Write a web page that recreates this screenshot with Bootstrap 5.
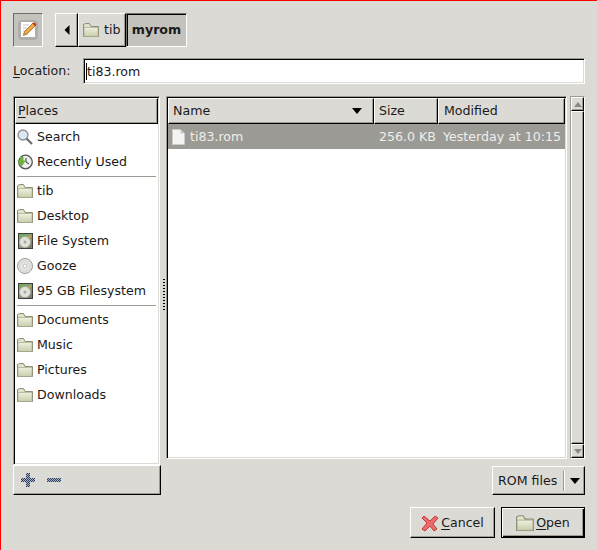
<!DOCTYPE html>
<html lang="en">
<head>
<meta charset="UTF-8" />
<title>Open File</title>
<link href="https://cdn.jsdelivr.net/npm/bootstrap@5.3.0/dist/css/bootstrap.min.css" rel="stylesheet">
<style>
  :root { --gtk-bg: #dcdad5; --gtk-dark: #9d9b94; }
  html, body { margin: 0; height: 100%; background: var(--gtk-bg); }
  body { font-family: "DejaVu Sans", sans-serif; font-size: 12.6px; line-height: 16px; color: #1a1a1a; overflow: hidden; }
  u { text-underline-offset: 2px; text-decoration-thickness: 1px; }
  .gtk-window { width: 597px; height: 550px; border-left: 1px solid #f00; border-top: 1px solid #f00; padding: 12px; background: var(--gtk-bg); }
  .bevel-out { border: 1px solid; border-color: #fff #000 #000 #fff; box-shadow: inset -1px -1px 0 var(--gtk-dark); }
  .bevel-in { border: 1px solid; border-color: var(--gtk-dark) #fff #fff var(--gtk-dark); box-shadow: inset 1px 1px 0 #000, inset -1px -1px 0 var(--gtk-bg); }
  .top-bar { height: 34px; margin-bottom: 11px; }
  .edit-toggle { width: 30px; height: 34px; background: #c4c2bd; border: 1px solid; border-color: #6f6e69 #fff #fff #6f6e69; margin-right: 12px; }
  .crumb { height: 34px; background: var(--gtk-bg); }
  .crumb-back { width: 23px; }
  .crumb-tib { width: 48px; gap: 5px; padding-left: 4px; }
  .crumb-cur { width: 61px; background: #c4c2bd; font-weight: 700; border-color: #6f6e69 #fff #fff #6f6e69; box-shadow: inset 1px 1px 0 #000; }
  .loc-row { height: 26px; margin-bottom: 12px; }
  .loc-label { width: 70px; }
  .loc-field { width: 502px; height: 26px; background: #fff; }
  .loc-input { border: 0; outline: 0; padding: 0 0 0 1px; margin-left: 2px; width: 480px; height: 22px; font: inherit; color: #1a1a1a; background: transparent; }
  .caret-mark { position: absolute; left: 2px; top: 4px; width: 1px; height: 17px; background: #000; }
  .main-row { height: 399px; }
  .places-col { width: 148px; }
  .places-pane { width: 147px; height: 369px; background: #fff; padding: 1px; }
  .col-head { height: 26px; padding-left: 2px; display: flex; align-items: center; background: var(--gtk-bg); white-space: nowrap; }
  .place-item { height: 25px; padding: 0 0 0 2px; gap: 4px; background: transparent; border: 0; border-radius: 0; color: #1a1a1a; white-space: nowrap; }
  .place-sep { height: 4px; padding: 1px 2px; }
  .place-sep div { height: 1px; background: var(--gtk-dark); margin-top: 1px; }
  .add-bar { width: 148px; height: 30px; background: var(--gtk-bg); padding-left: 6px; gap: 10px; }
  .pane-grip { width: 5px; height: 33px; background: repeating-linear-gradient(to bottom, #000 0, #000 1px, transparent 1px, transparent 3px) 2px 0 / 2px 100% no-repeat; }
  .files-col { width: 419px; }
  .files-pane { width: 401px; height: 363px; background: #fff; padding: 1px; flex: none; }
  .file-row { height: 25px; background: #9c9a94; color: #eeeeec; white-space: nowrap; }
  .cell-name { width: 206px; flex: none; }
  .head-name { padding-left: 4px; }
  .cell-size { width: 64px; flex: none; padding-left: 4px; }
  .cell-mod { flex: 1; padding-left: 5px; }
  .row-name { padding-left: 4px; gap: 5px; }
  .file-row .cell-size { padding-left: 5px; }
  .sort-arrow { margin-left: auto; margin-right: 11px; }
  .v-scroll { width: 15px; height: 363px; margin-left: 3px; background: #c4c2bd; border: 1px solid; border-color: var(--gtk-dark) #fff #fff var(--gtk-dark); }
  .scroll-btn { height: 14px; background: var(--gtk-bg); }
  .scroll-thumb { flex: 1; background: var(--gtk-bg); }
  .combo-row { margin-top: 7px; height: 29px; }
  .combo-btn { width: 93px; height: 29px; background: var(--gtk-bg); padding-left: 5px; }
  .combo-sep { width: 2px; height: 20px; margin-left: auto; border-left: 1px solid var(--gtk-dark); border-right: 1px solid #fff; }
  .combo-arrow { width: 19px; text-align: center; }
  .btn-row { margin-top: 12px; gap: 6px; }
  .gtk-btn { height: 31px; padding: 0; background: var(--gtk-bg); border-radius: 0; font: inherit; color: #1a1a1a; gap: 2px; }
  .gtk-btn:hover { background: var(--gtk-bg); color: #1a1a1a; }
  .btn-cancel { width: 85px; }
  .btn-open { width: 84px; border: 1px solid #000; box-shadow: inset 1px 1px 0 #fff, inset -1px -1px 0 #000, inset -2px -2px 0 var(--gtk-dark); }
</style>
</head>
<body>
<svg width="0" height="0" class="position-absolute">
  <defs>
    <linearGradient id="folderFill" x1="0" y1="0" x2="0" y2="1"><stop offset="0" stop-color="#eef0de"/><stop offset="1" stop-color="#c8ceaa"/></linearGradient>
    <linearGradient id="hdFill" x1="0" y1="0" x2="1" y2="1"><stop offset="0" stop-color="#62b048"/><stop offset=".4" stop-color="#8fa07c"/><stop offset="1" stop-color="#77786f"/></linearGradient>
    <radialGradient id="discFill"><stop offset="0" stop-color="#fff"/><stop offset=".7" stop-color="#d8d8d4"/><stop offset="1" stop-color="#eee"/></radialGradient>
    <pattern id="stipple" width="2" height="2" patternUnits="userSpaceOnUse"><rect width="2" height="2" fill="#a8b2c4"/><rect width="1" height="1" fill="#2f3f5c"/><rect x="1" y="1" width="1" height="1" fill="#2f3f5c"/></pattern>
    <symbol id="ico-folder" viewBox="0 0 16 16">
      <path d="M.5 2.500v12h15v-10H8L6.500 1.500h-4z" fill="#dfe1c8" stroke="#8e8f78"/>
      <path d="M1 14.500V5.500h14v9z" fill="url(#folderFill)" stroke="#a0a288" stroke-width=".6"/>
    </symbol>
    <symbol id="ico-hd" viewBox="0 0 16 16">
      <rect x="1.500" y=".5" width="14" height="15" fill="url(#hdFill)" stroke="#3d3f38"/>
      <circle cx="8" cy="9" r="5.500" fill="#e2e2dc" stroke="#a5a59c" stroke-width=".6"/>
      <circle cx="8" cy="9" r="1.500" fill="#a8a8a0"/>
      <path d="M9.500 7l3.500-4.500 1 1z" fill="#e6b422"/>
    </symbol>
    <symbol id="ico-disc" viewBox="0 0 16 16">
      <circle cx="8" cy="8" r="7.500" fill="url(#discFill)" stroke="#9a9a94"/>
      <circle cx="8" cy="8" r="2" fill="#fff" stroke="#a5a5a0" stroke-width=".7"/>
    </symbol>
  </defs>
</svg>

<div class="gtk-window d-flex flex-column">
  <div class="top-bar d-flex">
    <div class="edit-toggle d-flex align-items-center justify-content-center">
      <svg width="20" height="20" viewBox="0 0 20 20">
        <rect x="0" y="0" width="20" height="20" rx="4" fill="#b0aeaa"/>
        <rect x="3" y="2" width="14" height="15" fill="#fff"/>
        <path d="M5 5h6M5 8h4M5 11h3M5 14h5" stroke="#c4c4c4"/>
        <path d="M5.500 15.500l1-4L15 3l2.500 2.500L9 14z" fill="#eda93c" stroke="#8a5a1c" stroke-width=".7"/>
        <path d="M14.500 3.500l1.500-1.500 2.500 2.500L17 6z" fill="#cc2a2a"/>
      </svg>
    </div>
    <div class="d-flex">
      <div class="crumb crumb-back bevel-out d-flex align-items-center justify-content-center">
        <svg width="6" height="10" viewBox="0 0 6 10"><path d="M5.500 0v10L.5 5z" fill="#000"/></svg>
      </div>
      <div class="crumb crumb-tib bevel-out d-flex align-items-center">
        <svg width="16" height="16"><use href="#ico-folder"/></svg><span>tib</span>
      </div>
      <div class="crumb crumb-cur bevel-out d-flex align-items-center justify-content-center">myrom</div>
    </div>
  </div>

  <div class="loc-row d-flex align-items-center">
    <label class="loc-label" for="locInput"><u>L</u>ocation:</label>
    <div class="loc-field bevel-in position-relative d-flex align-items-center">
      <input id="locInput" class="loc-input" value="ti83.rom">
      <span class="caret-mark"></span>
    </div>
  </div>

  <div class="main-row d-flex">
    <div class="places-col d-flex flex-column">
      <div class="places-pane bevel-in">
        <div class="col-head bevel-out"><span><u>P</u>laces</span></div>
        <div class="list-group">
          <div class="list-group-item place-item d-flex align-items-center">
            <svg width="16" height="16" viewBox="0 0 16 16"><circle cx="6" cy="6" r="5" fill="#dbe6f2" stroke="#8d8f8c" stroke-width="1.300"/><path d="M9.500 9.500l5.500 5.500" stroke="#6e6e68" stroke-width="2.200"/></svg>Search
          </div>
          <div class="list-group-item place-item d-flex align-items-center">
            <svg width="16" height="16" viewBox="0 0 16 16"><circle cx="8.500" cy="8" r="6.800" fill="#eee" stroke="#55574f" stroke-width="1.300"/><path d="M9 4v4l3 2" stroke="#333" fill="none"/><path d="M0 6.500h3V3h3.500v3.500H9L4.500 12.500z" fill="#6fb03f"/></svg>Recently Used
          </div>
          <div class="place-sep"><div></div></div>
          <div class="list-group-item place-item d-flex align-items-center"><svg width="16" height="16"><use href="#ico-folder"/></svg>tib</div>
          <div class="list-group-item place-item d-flex align-items-center"><svg width="16" height="16"><use href="#ico-folder"/></svg>Desktop</div>
          <div class="list-group-item place-item d-flex align-items-center"><svg width="16" height="16"><use href="#ico-hd"/></svg>File System</div>
          <div class="list-group-item place-item d-flex align-items-center"><svg width="16" height="16"><use href="#ico-disc"/></svg>Gooze</div>
          <div class="list-group-item place-item d-flex align-items-center"><svg width="16" height="16"><use href="#ico-hd"/></svg>95 GB Filesystem</div>
          <div class="place-sep"><div></div></div>
          <div class="list-group-item place-item d-flex align-items-center"><svg width="16" height="16"><use href="#ico-folder"/></svg>Documents</div>
          <div class="list-group-item place-item d-flex align-items-center"><svg width="16" height="16"><use href="#ico-folder"/></svg>Music</div>
          <div class="list-group-item place-item d-flex align-items-center"><svg width="16" height="16"><use href="#ico-folder"/></svg>Pictures</div>
          <div class="list-group-item place-item d-flex align-items-center"><svg width="16" height="16"><use href="#ico-folder"/></svg>Downloads</div>
        </div>
      </div>
      <div class="add-bar bevel-out d-flex align-items-center">
        <svg width="16" height="16" viewBox="0 0 16 16" shape-rendering="crispEdges"><path d="M6 1h4v5h5v4h-5v5H6v-5H1V6h5z" fill="url(#stipple)"/></svg>
        <svg width="16" height="16" viewBox="0 0 16 16" shape-rendering="crispEdges"><rect x="1" y="6" width="14" height="4" fill="url(#stipple)"/></svg>
      </div>
    </div>

    <div class="pane-grip align-self-center"></div>

    <div class="files-col d-flex flex-column">
      <div class="d-flex">
        <div class="files-pane bevel-in">
          <div class="d-flex">
            <div class="col-head bevel-out cell-name head-name"><span>Name</span>
              <svg class="sort-arrow" width="10" height="6" viewBox="0 0 10 6"><path d="M0 0h10L5 6z" fill="#000"/></svg>
            </div>
            <div class="col-head bevel-out cell-size">Size</div>
            <div class="col-head bevel-out cell-mod">Modified</div>
          </div>
          <div class="file-row d-flex align-items-center">
            <div class="cell-name row-name d-flex align-items-center">
              <svg width="13" height="16" viewBox="0 0 13 16"><path d="M.5.5h8l4 4v11H.5z" fill="#f4f4f2" stroke="#d0d0cc" stroke-width=".6"/><path d="M8.500.5v4h4" fill="#ccc"/></svg>
              <span>ti83.rom</span>
            </div>
            <div class="cell-size">256.0 KB</div>
            <div class="cell-mod">Yesterday at 10:15</div>
          </div>
        </div>
        <div class="v-scroll d-flex flex-column">
          <div class="scroll-btn bevel-out d-flex align-items-center justify-content-center"><svg width="8" height="5" viewBox="0 0 8 5"><path d="M0 5h8L4 0z" fill="#8c8a84"/></svg></div>
          <div class="scroll-thumb bevel-out"></div>
          <div class="scroll-btn bevel-out d-flex align-items-center justify-content-center"><svg width="8" height="5" viewBox="0 0 8 5"><path d="M0 0h8L4 5z" fill="#8c8a84"/></svg></div>
        </div>
      </div>
      <div class="combo-row d-flex justify-content-end">
        <div class="combo-btn bevel-out d-flex align-items-center">ROM files<span class="combo-sep"></span>
          <span class="combo-arrow"><svg width="10" height="6" viewBox="0 0 10 6"><path d="M0 0h10L5 6z" fill="#000"/></svg></span>
        </div>
      </div>
    </div>
  </div>

  <div class="btn-row d-flex justify-content-end">
    <button type="button" class="btn gtk-btn btn-cancel bevel-out d-flex align-items-center justify-content-center">
      <svg width="18" height="18" viewBox="0 0 18 18"><path d="M3 2l6 5 5-5 3 2-5 6 4 5-3 2-4-5-5 5-3-2 5-6-5-5z" fill="#ec6a6a" stroke="#b22" stroke-width=".8"/></svg>
      <span><u>C</u>ancel</span>
    </button>
    <button type="button" class="btn gtk-btn btn-open d-flex align-items-center justify-content-center">
      <svg width="18" height="18"><use href="#ico-folder"/></svg>
      <span><u>O</u>pen</span>
    </button>
  </div>
</div>
<script src="https://cdn.jsdelivr.net/npm/bootstrap@5.3.0/dist/js/bootstrap.bundle.min.js"></script>
</body>
</html>
